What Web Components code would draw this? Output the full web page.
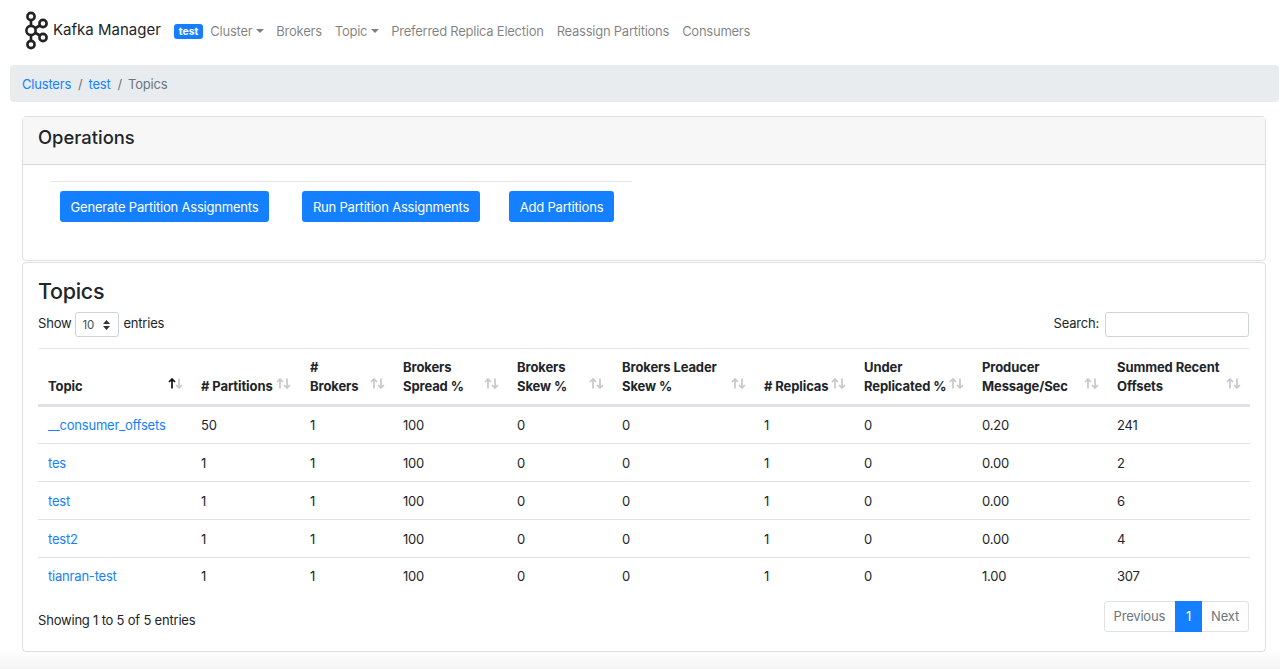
<!doctype html>
<html lang="en">
  <head>
    <meta charset="utf-8">
    <title>Kafka Manager</title>
    <style>
      html, body { margin: 0; height: 100%; }
      body {
        font: 13px/20px Inter, "Liberation Sans", sans-serif;
        letter-spacing: -.2px;
        color: #212529;
        background: linear-gradient(#fff 650px, #f4f4f4 669px);
        overflow: hidden;
      }
    </style>
  </head>
  <body>
    <km-navbar></km-navbar>
    <km-breadcrumb></km-breadcrumb>
    <km-container>
      <km-operations></km-operations>
      <km-topics></km-topics>
    </km-container>
    <script>
class KmNavbar extends HTMLElement {
  constructor() {
    super();
    this.attachShadow({ mode: 'open' });
    this.shadowRoot.innerHTML = `
      <style>
        :host { display: flex; align-items: center; height: 62px; padding: 0 0 3px 24px; letter-spacing: -.25px; }
        svg { width: 26px; height: 40px; margin-right: 3px; }
        .brand { font-size: 15px; letter-spacing: 0; color: #212529; margin: -3px 13px 0 0; }
        .badge {
          background: #1580ff; color: #fff; font-size: 10.4px; font-weight: 700; line-height: 13px; letter-spacing: 0;
          padding: 1px 5px; border-radius: 3px; margin-right: 7px;
        }
        a { color: rgba(0,0,0,.5); margin-right: 13px; white-space: nowrap; }
        a.caret { margin-right: 12px; }
        .caret::after {
          content: ''; display: inline-block; margin-left: 4px; vertical-align: 3px;
          border-top: 4px solid; border-left: 4px solid transparent; border-right: 4px solid transparent;
        }
      </style>
      <svg viewBox="0 0 26 40" fill="none" stroke="#222" stroke-width="2.6">
        <path d="M7 9V14M7 24V29M11.5 17L16 14.5M11.5 22L16 24.5"/>
        <circle cx="7" cy="5.5" r="3.6"/>
        <circle cx="7" cy="19.5" r="4.6"/>
        <circle cx="7" cy="33.5" r="3.6"/>
        <circle cx="19" cy="12.5" r="3.6"/>
        <circle cx="19" cy="26.5" r="3.6"/>
      </svg>
      <span class="brand">Kafka Manager</span>
      <span class="badge">test</span>
      <a class="caret">Cluster</a>
      <a>Brokers</a>
      <a class="caret">Topic</a>
      <a>Preferred Replica Election</a>
      <a>Reassign Partitions</a>
      <a>Consumers</a>
    `;
  }
}

class KmBreadcrumb extends HTMLElement {
  constructor() {
    super();
    this.attachShadow({ mode: 'open' });
    this.shadowRoot.innerHTML = `
      <style>
        :host {
          display: flex; align-items: center; height: 37px; margin: 0 1px 14px 10px; padding-left: 12px;
          background: #e9ecef; border-radius: 4px; color: #6c757d;
        }
        a { color: #1580ff; }
        i { font-style: normal; padding: 0 6px 0 7px; }
      </style>
      <a>Clusters</a><i>/</i><a>test</a><i>/</i><span>Topics</span>
    `;
  }
}

class KmContainer extends HTMLElement {
  constructor() {
    super();
    this.attachShadow({ mode: 'open' });
    this.shadowRoot.innerHTML = `
      <style>
        :host { display: flex; flex-direction: column; gap: 1px; margin: 0 14px 0 22px; }
      </style>
      <slot></slot>
    `;
  }
}

class KmOperations extends HTMLElement {
  constructor() {
    super();
    this.attachShadow({ mode: 'open' });
    this.shadowRoot.innerHTML = `
      <style>
        :host {
          display: block; height: 145px; box-sizing: border-box;
          border: 1px solid rgba(0,0,0,.125); border-radius: 4px;
        }
        header {
          height: 48px; box-sizing: border-box; padding: 7px 15px; background: #f7f7f7;
          border-bottom: 1px solid rgba(0,0,0,.125);
          font-size: 18.4px; line-height: 26px; font-weight: 500; letter-spacing: 0;
        }
        .rule { width: 581px; margin: 16px 0 0 28px; border-top: 1px solid rgba(0,0,0,.1); }
        .buttons { display: flex; margin: 9px 0 0 37px; }
        button {
          font: inherit; letter-spacing: inherit; color: #fff; background: #1580ff; border: 0; border-radius: 3px;
          height: 31px; padding: 0; white-space: nowrap;
        }
        button:nth-child(1) { width: 209px; margin-right: 33px; }
        button:nth-child(2) { width: 178px; margin-right: 29px; }
        button:nth-child(3) { width: 105px; }
      </style>
      <header>Operations</header>
      <div class="rule"></div>
      <div class="buttons">
        <button>Generate Partition Assignments</button>
        <button>Run Partition Assignments</button>
        <button>Add Partitions</button>
      </div>
    `;
  }
}

// label, column width, sort icon x inside the column
const COLUMNS = [
  ['Topic', 153, 130], ['# Partitions', 109, 85], ['#<br>Brokers', 93, 70],
  ['Brokers<br>Spread %', 114, 91], ['Brokers<br>Skew %', 105, 82], ['Brokers Leader<br>Skew %', 142, 119],
  ['# Replicas', 100, 77], ['Under<br>Replicated %', 118, 95], ['Producer<br>Message/Sec', 135, 112],
  ['Summed Recent<br>Offsets', 143, 119]
];
const ROWS = [
  ['__consumer_offsets', 50, 1, 100, 0, 0, 1, 0, '0.20', 241],
  ['tes', 1, 1, 100, 0, 0, 1, 0, '0.00', 2],
  ['test', 1, 1, 100, 0, 0, 1, 0, '0.00', 6],
  ['test2', 1, 1, 100, 0, 0, 1, 0, '0.00', 4],
  ['tianran-test', 1, 1, 100, 0, 0, 1, 0, '1.00', 307]
];

class KmTopics extends HTMLElement {
  constructor() {
    super();
    this.attachShadow({ mode: 'open' });
    const cols = COLUMNS.map(c => `<col style="width:${c[1]}px">`).join('');
    const head = COLUMNS.map((c, i) => `<th>${c[0]}<svg style="left:${c[2]}px" viewBox="0 0 15 11" class="${i === 0 ? 'sorted' : ''}"><path class="up" d="M4 10.5V1M1 4l3-3 3 3"/><path d="M11 .5V10M8 7l3 3 3-3"/></svg></th>`).join('');
    const body = ROWS.map(r => `<tr>${r.map((v, i) => i === 0 ? `<td><a>${v}</a></td>` : `<td>${v}</td>`).join('')}</tr>`).join('');
    this.shadowRoot.innerHTML = `
      <style>
        :host {
          display: block; height: 390px; box-sizing: border-box; padding: 13px 16px 0 15px;
          border: 1px solid rgba(0,0,0,.125); border-radius: 4px;
        }
        h3 { margin: 0; font-size: 21.5px; line-height: 30px; font-weight: 500; letter-spacing: -.3px; }
        .controls { display: flex; justify-content: space-between; align-items: center; height: 27px; margin: 5px 0 10px; }
        .controls > div { display: flex; align-items: center; }
        .controls b { font-weight: 400; margin-top: -3px; }
        .select {
          display: flex; align-items: center; justify-content: space-between; box-sizing: border-box;
          width: 44px; height: 25px; margin: 0 4px; padding: 0 8px 0 6px; font-size: 11.5px; color: #495057;
          border: 1px solid #ced4da; border-radius: 3px;
        }
        .select svg { width: 7px; height: 10px; }
        .search { box-sizing: border-box; width: 144px; height: 25px; margin-left: 6px; border: 1px solid #ced4da; border-radius: 3px; }
        table { width: 1212px; table-layout: fixed; border-collapse: collapse; }
        th {
          position: relative; box-sizing: border-box; height: 57px; padding: 9px 10px 8px; text-align: left; vertical-align: bottom;
          line-height: 19px; font-weight: 700; letter-spacing: -.1px; border-top: 1px solid #e6e8eb; border-bottom: 3px solid #dee2e6;
        }
        th svg {
          position: absolute; bottom: 15px; width: 15px; height: 11px;
          fill: none; stroke: #c8c8c8; stroke-width: 1.7;
        }
        th svg.sorted .up { stroke: #111; }
        td { height: 38px; box-sizing: border-box; padding: 0 10px; border-bottom: 1px solid #dee2e6; white-space: nowrap; }
        tr:last-child td { padding-bottom: 1px; border-bottom: 0; }
        a { color: #1580ff; }
        .foot { display: flex; justify-content: space-between; align-items: center; margin-top: 5px; }
        .foot > span { margin-top: 8px; }
        .pager { display: flex; height: 31px; box-sizing: border-box; border: 1px solid #dee2e6; border-radius: 3px; color: #6c757d; line-height: 29px; }
        .pager span { padding: 0 9px; }
        .pager span:first-child { padding-right: 10px; }
        .pager .on { width: 27px; margin: -1px 0; padding: 1px 0; box-sizing: content-box; height: 29px; background: #1580ff; color: #fff; text-align: center; }
      </style>
      <h3>Topics</h3>
      <div class="controls">
        <div><b>Show</b><span class="select">10<svg viewBox="0 0 7 10" fill="#333"><path d="M3.5 0L7 4H0zM3.5 10L0 6h7z"/></svg></span><b>entries</b></div>
        <div><b>Search:</b><div class="search"></div></div>
      </div>
      <table>
        <colgroup>${cols}</colgroup>
        <thead><tr>${head}</tr></thead>
        <tbody>${body}</tbody>
      </table>
      <div class="foot">
        <span>Showing 1 to 5 of 5 entries</span>
        <div class="pager"><span>Previous</span><span class="on">1</span><span>Next</span></div>
      </div>
    `;
  }
}

customElements.define('km-navbar', KmNavbar);
customElements.define('km-breadcrumb', KmBreadcrumb);
customElements.define('km-container', KmContainer);
customElements.define('km-operations', KmOperations);
customElements.define('km-topics', KmTopics);
    </script>
  </body>
</html>
